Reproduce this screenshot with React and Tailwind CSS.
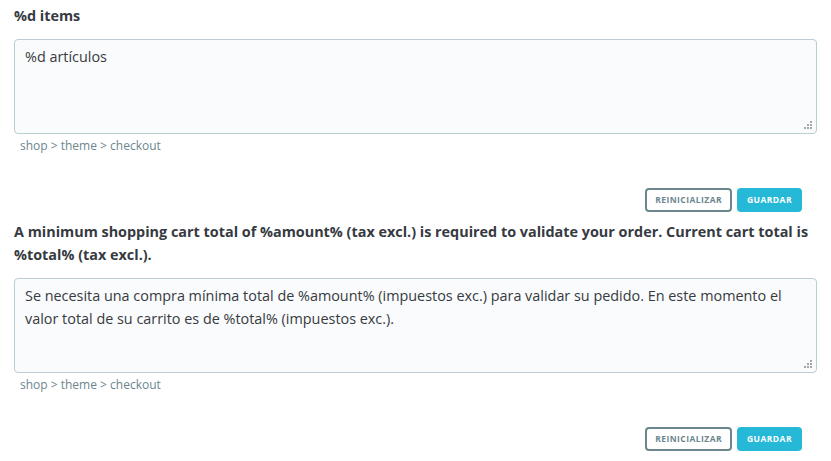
import React from "react";

const Grip = () => (
  <svg
    width="9"
    height="9"
    viewBox="0 0 9 9"
    className="absolute right-[4px] bottom-[4px] pointer-events-none"
  >
    <rect x="6" y="0" width="2" height="2" fill="#a0a8ad" />
    <rect x="3" y="3" width="2" height="2" fill="#a0a8ad" />
    <rect x="6" y="3" width="2" height="2" fill="#a0a8ad" />
    <rect x="0" y="6" width="2" height="2" fill="#a0a8ad" />
    <rect x="3" y="6" width="2" height="2" fill="#a0a8ad" />
    <rect x="6" y="6" width="2" height="2" fill="#a0a8ad" />
  </svg>
);

const TranslationField = ({ label, value, first }) => {
  return (
    <div className={first ? "pt-[4px]" : "pt-[8px]"}>
      <label className="block text-[14.4px] leading-[23px] font-bold text-[#363a41]">
        {label}
      </label>
      <div className="relative mt-[12px]">
        <textarea
          defaultValue={value}
          className="block w-full h-[95px] resize-none rounded-[4px] border border-[#bbcdd2] bg-[#fafbfc] px-[10px] py-[5px] text-[14.4px] leading-[23px] text-[#363a41] outline-none"
        />
        <Grip />
      </div>
      <div className="mt-[3px] pl-[6px] text-[12px] leading-[18px] text-[#6c868e]">
        shop &gt; theme &gt; checkout
      </div>
      <div className="mt-[33px] flex justify-end gap-[5px] pr-[15px]">
        <button className="h-[24px] px-[8px] rounded-[4px] border-2 border-[#6c868e] bg-white text-[8.5px] font-bold uppercase tracking-[0.45px] text-[#6c868e]">
          Reinicializar
        </button>
        <button className="h-[24px] px-[8px] rounded-[4px] border-2 border-[#25b9d7] bg-[#25b9d7] text-[8.5px] font-bold uppercase tracking-[0.45px] text-white">
          Guardar
        </button>
      </div>
    </div>
  );
};

export default function App() {
  return (
    <div
      className="w-[831px] h-[461px] overflow-hidden bg-white px-[14px]"
      style={{ fontFamily: '"Open Sans", sans-serif' }}
    >
      <TranslationField first label="%d items" value="%d artículos" />
      <TranslationField
        label="A minimum shopping cart total of %amount% (tax excl.) is required to validate your order. Current cart total is %total% (tax excl.)."
        value="Se necesita una compra mínima total de %amount% (impuestos exc.) para validar su pedido. En este momento el valor total de su carrito es de %total% (impuestos exc.)."
      />
    </div>
  );
}
